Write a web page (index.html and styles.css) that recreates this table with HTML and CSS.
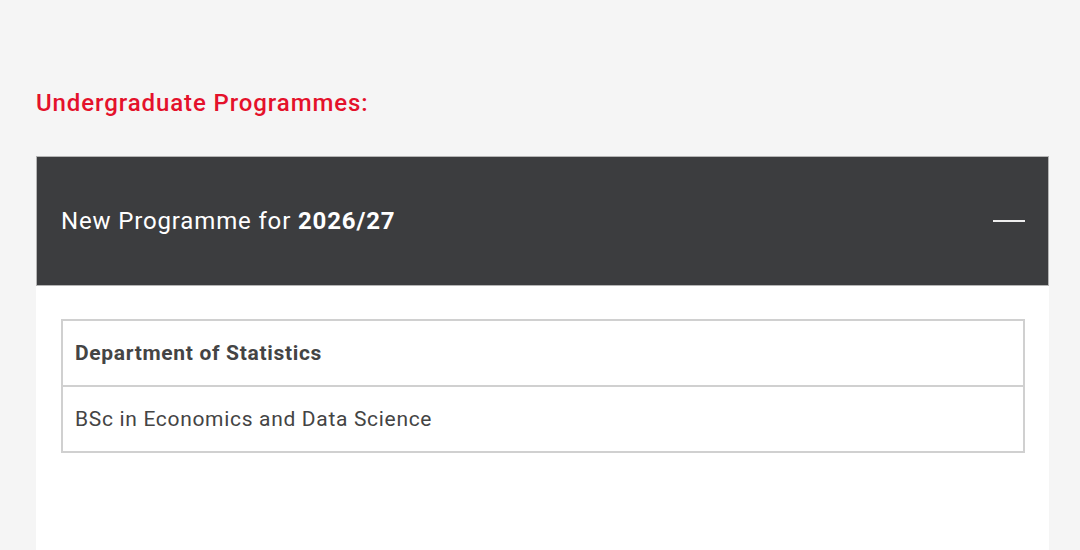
FILE: index.html
```html
<!DOCTYPE html>
<html lang="en">
<head>
<meta charset="utf-8">
<link rel="stylesheet" href="styles.css">
</head>
<body>
<main class="page">
  <h2 class="section-title">Undergraduate Programmes:</h2>
  <section class="accordion">
    <div class="acc-head">
      <span class="acc-title">New Programme for <strong>2026/27</strong></span>
      <span class="acc-toggle"></span>
    </div>
    <div class="acc-body">
      <table class="prog-table">
        <tr><th>Department of Statistics</th></tr>
        <tr><td>BSc in Economics and Data Science</td></tr>
      </table>
    </div>
  </section>
</main>
</body>
</html>
```

FILE: styles.css
```css
html, body {
  margin: 0;
  padding: 0;
  background: #f5f5f5;
  font-family: Roboto, "Liberation Sans", sans-serif;
}
.page {
  padding: 84px 31px 0 36px;
}
.section-title {
  margin: 0;
  color: #e4112b;
  font-size: 24px;
  font-weight: 500;
  letter-spacing: 0.9px;
  line-height: 38px;
}
.accordion {
  margin-top: 34px;
  background: #fff;
  height: 400px;
}
.acc-head {
  background: #3c3d3f;
  border: 1px solid #b5b5b5;
  height: 128px;
  padding: 0 23px 0 24px;
  display: flex;
  align-items: center;
  justify-content: space-between;
  color: #fff;
}
.acc-title {
  font-size: 24px;
  font-weight: 400;
  letter-spacing: 0.85px;
}
.acc-title strong {
  font-weight: 700;
}
.acc-toggle {
  width: 32px;
  height: 2px;
  background: #eee;
}
.acc-body {
  padding: 33px 24px 0 25px;
}
.prog-table {
  width: 100%;
  border-collapse: separate;
  border-spacing: 0;
  border: 2px solid #d0d0d0;
  color: #444;
  font-size: 21px;
  letter-spacing: 0.68px;
}
.prog-table th,
.prog-table td {
  text-align: left;
  padding: 0 12px;
  height: 64px;
}
.prog-table th {
  font-weight: 700;
  border-bottom: 2px solid #d0d0d0;
}
```
